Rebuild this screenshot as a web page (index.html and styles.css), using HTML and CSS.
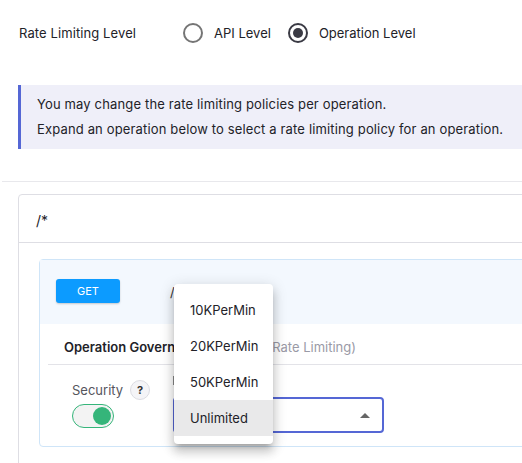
FILE: index.html
```html
<!DOCTYPE html>
<html>
<head>
<meta charset="utf-8">
<link rel="stylesheet" href="styles.css">
</head>
<body>
<div class="page">
  <div class="level-row">
    <div class="level-label">Rate Limiting Level</div>
    <label class="radio"><span class="radio-circle"></span><span>API Level</span></label>
    <label class="radio"><span class="radio-circle checked"></span><span>Operation Level</span></label>
  </div>

  <div class="info">
    <div>You may change the rate limiting policies per operation.</div>
    <div>Expand an operation below to select a rate limiting policy for an operation.</div>
  </div>

  <div class="sep"></div>

  <div class="card">
    <div class="card-head">/*</div>
    <div class="card-body">
      <div class="op">
        <div class="op-head">
          <span class="method">GET</span>
          <span class="op-path">/</span>
        </div>
        <div class="op-body">
          <div class="gov-title"><b>Operation Governance</b> <span class="muted">(Security, Rate Limiting)</span></div>
          <div class="gov-row">
            <div class="sec">
              <div class="sec-label">Security <span class="help">?</span></div>
              <span class="toggle"><span class="knob"></span></span>
            </div>
            <div class="policy">
              <div class="policy-label"><span class="label-mark"></span></div>
              <div class="select"><span class="caret"></span></div>
              <ul class="menu">
                <li>10KPerMin</li>
                <li>20KPerMin</li>
                <li>50KPerMin</li>
                <li class="active">Unlimited</li>
              </ul>
            </div>
          </div>
        </div>
      </div>
    </div>
  </div>
</div>
</body>
</html>
```

FILE: styles.css
```css
* { box-sizing: border-box; }
html, body { margin: 0; padding: 0; overflow: hidden; background: #fff; }
body {
  font-family: "Inter", "Noto Sans", sans-serif;
  font-size: 13px;
  color: #222228;
  width: 522px;
  height: 463px;
}
.page { width: 700px; }

.level-row {
  display: flex;
  align-items: center;
  height: 20px;
  margin-top: 23px;
  padding-left: 19px;
}
.level-label { width: 164px; letter-spacing: 0.1px; }
.radio { display: flex; align-items: center; margin-right: 17px; }
.radio-circle {
  width: 20px; height: 20px;
  border: 2px solid #757575;
  border-radius: 50%;
  margin-right: 11px;
  position: relative;
}
.radio-circle.checked { border-color: #3a3a44; }
.radio-circle.checked::after {
  content: "";
  position: absolute;
  left: 3px; top: 3px;
  width: 10px; height: 10px;
  border-radius: 50%;
  background: #3a3a44;
}

.info {
  margin: 42px 0 0 18px;
  background: #efeff9;
  border-left: 3px solid #5567d5;
  padding: 7px 0 7px 16px;
  line-height: 25px;
  height: 64px;
  letter-spacing: 0.15px;
}

.sep {
  margin: 32px 0 0 2px;
  border-top: 1px solid #e8e8ec;
}

.card {
  margin: 12px 0 0 18px;
  border: 1px solid #dedee4;
  border-radius: 4px;
  height: 300px;
}
.card-head {
  height: 48px;
  padding: 17px 0 0 17px;
  border-bottom: 1px solid #dedee4;
  font-size: 14px;
}
.card-body { padding: 16px 0 0 20px; }

.op {
  border: 1px solid #cfe5f8;
  border-radius: 4px;
  height: 188px;
}
.op-head {
  background: #f3f8fe;
  height: 64px;
  display: flex;
  align-items: center;
  padding-left: 16px;
}
.method {
  width: 64px; height: 24px;
  background: #0c9bff;
  color: #fff;
  border-radius: 3px;
  font-size: 11px;
  display: flex; align-items: center; justify-content: center;
  box-shadow: 0 1px 2px rgba(0,0,0,0.2);
  margin-top: -2px;
}
.op-path { margin-left: 50px; font-size: 13px; color: #333; }

.op-body { padding: 0 8px; }
.gov-title {
  height: 41px;
  padding: 15px 0 0 16px;
  border-bottom: 1px solid #e3e3e8;
}
.gov-title b { font-weight: 600; }
.muted { color: #9a9aa6; }

.gov-row { display: flex; padding-left: 24px; }
.sec { width: 101px; padding-top: 15px; }
.sec-label {
  display: flex; align-items: center;
  color: #55555c;
  height: 20px;
}
.help {
  width: 20px; height: 20px;
  margin-left: 7px;
  border-radius: 50%;
  border: 1px solid #dcdce2;
  background: #f4f4f7;
  font-size: 11px;
  font-weight: 700;
  color: #333;
  display: flex; align-items: center; justify-content: center;
}
.toggle {
  display: block;
  margin-top: 4px;
  width: 42px; height: 24px;
  border: 1.5px solid #35b57a;
  border-radius: 12px;
  background: #f3f3f3;
  position: relative;
}
.knob {
  position: absolute;
  right: 2px; top: 1.5px;
  width: 18px; height: 18px;
  border-radius: 50%;
  background: #35b57a;
}

.policy { position: relative; padding-top: 10px; }
.policy-label { height: 22px; padding-top: 1px; }
.label-mark {
  display: block;
  width: 1px; height: 9px;
  background: #888;
}
.select {
  width: 211px; height: 36px;
  border: 2px solid #5567d5;
  border-radius: 4px;
  position: relative;
}
.caret {
  position: absolute;
  right: 12px; top: 14px;
  width: 0; height: 0;
  border-left: 5px solid transparent;
  border-right: 5px solid transparent;
  border-bottom: 5px solid #666;
}
.menu {
  position: absolute;
  left: 1px; top: -81px;
  width: 99px;
  margin: 0;
  padding: 8px 0;
  list-style: none;
  background: #fff;
  border-radius: 4px;
  box-shadow: 0 5px 5px -3px rgba(0,0,0,0.2), 0 8px 10px 1px rgba(0,0,0,0.14), 0 3px 14px 2px rgba(0,0,0,0.12);
}
.menu li {
  height: 36px;
  line-height: 36px;
  padding-left: 16px;
  font-size: 13px;
  color: #222228;
}
.menu li.active { background: #e9e9ea; }
```
